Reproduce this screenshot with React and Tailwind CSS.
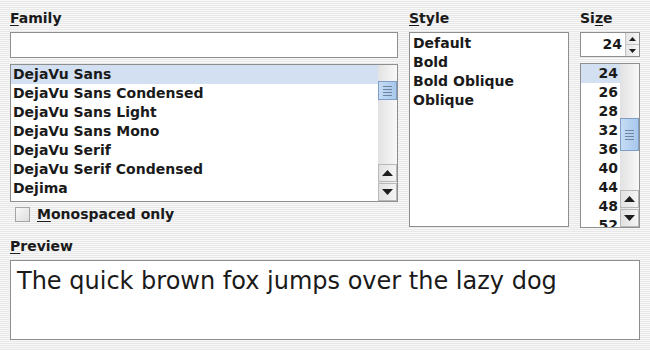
import React from 'react';

const families = [
  'DejaVu Sans',
  'DejaVu Sans Condensed',
  'DejaVu Sans Light',
  'DejaVu Sans Mono',
  'DejaVu Serif',
  'DejaVu Serif Condensed',
  'Dejima',
];
const styles = ['Default', 'Bold', 'Bold Oblique', 'Oblique'];
const sizes = [24, 26, 28, 32, 36, 40, 44, 48, 52];

const Arrow = ({ down, small }) => (
  <svg width={small ? 7 : 11} height={small ? 4 : 6} viewBox="0 0 11 6" className="block">
    {down ? <path d="M0 0 H11 L5.5 6 Z" fill="#1e1e1e" /> : <path d="M0 6 H11 L5.5 0 Z" fill="#1e1e1e" />}
  </svg>
);

const ArrowButton = ({ down }) => (
  <div className="h-[18px] flex items-center justify-center border border-[#b8b8b8] bg-gradient-to-r from-[#e2e2e2] to-[#f4f4f4]">
    <Arrow down={down} />
  </div>
);

const Thumb = ({ top, height }) => (
  <div
    className="border border-[#7f9fc6] bg-gradient-to-r from-[#c4dbf4] to-[#a8c8ec] flex flex-col items-center justify-center gap-[2px]"
    style={{ marginTop: top, height }}
  >
    {[0, 1, 2, 3].map((i) => (
      <div key={i} className="w-[9px] h-px bg-[#6e84a0]" />
    ))}
  </div>
);

const Scrollbar = ({ top, height }) => (
  <div className="w-[19px] flex flex-col bg-gradient-to-r from-[#e2e2e2] to-[#f8f8f8]">
    <div className="flex-1">
      <Thumb top={top} height={height} />
    </div>
    <ArrowButton />
    <div className="h-px" />
    <ArrowButton down />
  </div>
);

const Label = ({ first, rest, pre = '' }) => (
  <div className="h-[16px] leading-[16px] font-bold text-[14px] text-[#1a1a1a]">
    {pre}
    <span className="underline underline-offset-2">{first}</span>
    {rest}
  </div>
);

export default function App() {
  return (
    <div
      className="w-[650px] h-[350px] overflow-hidden text-[#1a1a1a] bg-[repeating-linear-gradient(to_bottom,#f8f8f8_0px,#f8f8f8_1px,#e8e8e8_1px,#e8e8e8_2px)]"
      style={{ fontFamily: '"DejaVu Sans", sans-serif' }}
    >
      <div className="flex pl-[10px] pr-[10px] pt-[10px] gap-[11px]">
        {/* Family */}
        <div className="w-[388px] flex flex-col">
          <Label first="F" rest="amily" />
          <div className="mt-[6px] h-[26px] border border-[#8e8e8e] bg-white" />
          <div className="mt-[6px] h-[138px] border border-[#8e8e8e] bg-white flex">
            <div className="flex-1 flex flex-col">
              {families.map((f, i) => (
                <div
                  key={f}
                  className={`h-[19px] leading-[19px] pl-[2px] font-bold text-[14px] whitespace-nowrap ${i === 0 ? 'bg-[#d3e0f2]' : ''}`}
                >
                  {f}
                </div>
              ))}
            </div>
            <Scrollbar top={16} height={19} />
          </div>
          <div className="mt-[4px] flex items-center gap-[7px] pl-[5px]">
            <div className="w-[15px] h-[15px] border border-[#a4a4a4] bg-gradient-to-br from-[#f8f8f8] to-[#dedede]" />
            <Label first="M" rest="onospaced only" />
          </div>
        </div>

        {/* Style */}
        <div className="w-[160px] flex flex-col">
          <Label first="S" rest="tyle" />
          <div className="mt-[6px] h-[195px] border border-[#8e8e8e] bg-white flex flex-col pt-px">
            {styles.map((s) => (
              <div key={s} className="h-[19px] leading-[19px] pl-[3px] font-bold text-[14px]">
                {s}
              </div>
            ))}
          </div>
        </div>

        {/* Size */}
        <div className="w-[60px] flex flex-col">
          <Label first="z" pre="Si" rest="e" />
          <div className="mt-[6px] h-[25px] border border-[#8e8e8e] bg-white flex">
            <div className="flex-1 text-right pr-[3px] leading-[23px] font-bold text-[14px]">24</div>
            <div className="w-[14px] flex flex-col border-l border-[#c4c4c4]">
              <div className="flex-1 flex items-center justify-center bg-gradient-to-r from-[#e6e6e6] to-[#f6f6f6] border-b border-[#c4c4c4]">
                <Arrow small />
              </div>
              <div className="flex-1 flex items-center justify-center bg-gradient-to-r from-[#e6e6e6] to-[#f6f6f6]">
                <Arrow small down />
              </div>
            </div>
          </div>
          <div className="mt-[6px] h-[165px] border border-[#8e8e8e] bg-white flex overflow-hidden">
            <div className="flex-1 flex flex-col overflow-hidden">
              {sizes.map((s, i) => (
                <div
                  key={s}
                  className={`h-[19px] shrink-0 leading-[19px] text-right pr-[2px] font-bold text-[14px] ${i === 0 ? 'bg-[#d3e0f2]' : ''}`}
                >
                  {s}
                </div>
              ))}
            </div>
            <Scrollbar top={54} height={33} />
          </div>
        </div>
      </div>

      {/* Preview */}
      <div className="pl-[10px] pr-[10px] mt-[10px]">
        <Label first="P" rest="review" />
        <div className="mt-[6px] h-[80px] border border-[#8e8e8e] bg-white pl-[6px] pt-[5px]">
          <div className="text-[24px] leading-[30px] whitespace-nowrap">The quick brown fox jumps over the lazy dog</div>
        </div>
      </div>
    </div>
  );
}
